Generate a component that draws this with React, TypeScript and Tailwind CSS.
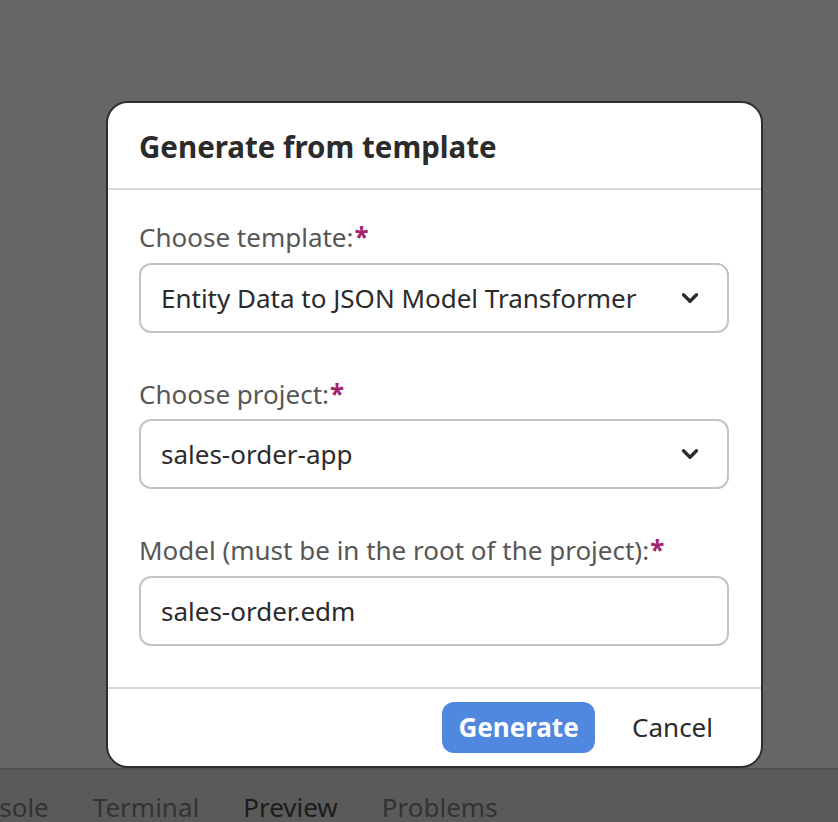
import { ChevronDown } from "lucide-react";

const Label = ({ text }: { text: string }) => (
  <label className="block text-[26px] leading-[32px] text-[#575757]">
    {text}
    <span className="ml-[1px] font-bold text-[#a3236c]">*</span>
  </label>
);

const SelectBox = ({ value }: { value: string }) => (
  <div className="flex h-[70px] items-center justify-between rounded-[12px] border-2 border-[#c4c4c4] bg-white pl-[20px] pr-[24px]">
    <span className="text-[26px] text-[#2b2b2b]">{value}</span>
    <ChevronDown className="h-[26px] w-[26px] text-[#2b2b2b]" strokeWidth={3} />
  </div>
);

export default function App() {
  return (
    <div className="flex h-[822px] w-full flex-col overflow-hidden bg-[#666666] font-['Noto_Sans',sans-serif]">
      <div className="h-[768px] shrink-0 pl-[106px] pt-[101px]">
        <div className="flex h-[667px] w-[657px] flex-col rounded-[22px] border-2 border-[#2e2e2e] bg-white">
          <div className="flex h-[87px] items-center border-b-2 border-[#d9d9d9] px-[31px] pt-[3px]">
            <h1 className="text-[29.5px] font-bold text-[#2b2b2b]">Generate from template</h1>
          </div>

          <div className="flex flex-1 flex-col gap-[45px] pl-[31px] pr-[32px] pt-[31px]">
            <div className="flex flex-col gap-[10px]">
              <Label text="Choose template:" />
              <SelectBox value="Entity Data to JSON Model Transformer" />
            </div>
            <div className="flex flex-col gap-[9px]">
              <Label text="Choose project:" />
              <SelectBox value="sales-order-app" />
            </div>
            <div className="flex flex-col gap-[10px]">
              <Label text="Model (must be in the root of the project):" />
              <input
                readOnly
                value="sales-order.edm"
                className="h-[70px] rounded-[12px] border-2 border-[#c4c4c4] bg-white px-[20px] text-[26px] text-[#2b2b2b] outline-none"
              />
            </div>
          </div>

          <div className="flex h-[79px] items-center justify-end gap-[23px] border-t-2 border-[#d9d9d9] pr-[34px]">
            <button className="h-[51px] w-[153px] rounded-[12px] bg-[#5087df] text-[26px] font-bold text-white">
              Generate
            </button>
            <button className="h-[51px] px-[14px] text-[26px] text-[#2b2b2b]">Cancel</button>
          </div>
        </div>
      </div>

      <div className="flex flex-1 items-end border-t-2 border-[#4e4e4e] bg-[#5a5a5a]">
        <div className="-ml-[49px] flex translate-y-[5px] gap-[44px] text-[26px] text-[#333333]">
          <span>Console</span>
          <span>Terminal</span>
          <span className="text-[#1c1c1c]">Preview</span>
          <span>Problems</span>
        </div>
      </div>
    </div>
  );
}
